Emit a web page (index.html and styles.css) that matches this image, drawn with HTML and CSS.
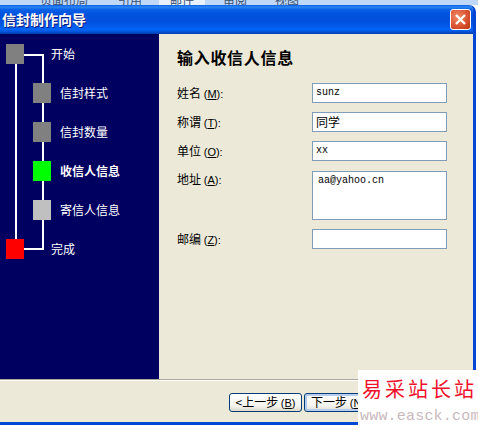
FILE: index.html
```html
<!DOCTYPE html>
<html lang="zh-CN">
<head>
<meta charset="utf-8">
<title>信封制作向导</title>
<link rel="stylesheet" href="styles.css">
</head>
<body>
<div class="screen">
  <div class="ribbon">
    <span class="tab tab-a">页面布局</span>
    <span class="tab tab-b">引用</span>
    <span class="tab tab-c">邮件</span>
    <span class="tab tab-d">审阅</span>
    <span class="tab tab-e">视图</span>
  </div>
  <div class="window">
    <div class="titlebar">
      <span class="title">信封制作向导</span>
      <span class="close"><svg width="13" height="13" viewBox="0 0 13 13"><path d="M2 2 11 11M11 2 2 11" stroke="#fff" stroke-width="2.4" fill="none"/></svg></span>
    </div>
    <div class="main">
      <nav class="nav">
        <i class="line line-outer"></i>
        <i class="line line-left"></i>
        <i class="line line-top"></i>
        <i class="line line-bottom"></i>
        <i class="node n1"></i><span class="step s1">开始</span>
        <i class="node n2"></i><span class="step s2">信封样式</span>
        <i class="node n3"></i><span class="step s3">信封数量</span>
        <i class="node n4"></i><span class="step s4 current">收信人信息</span>
        <i class="node n5"></i><span class="step s5">寄信人信息</span>
        <i class="node n6"></i><span class="step s6">完成</span>
      </nav>
      <section class="content">
        <h1 class="heading">输入收信人信息</h1>
        <div class="form">
          <label class="label">姓名 <span class="key">(<u>M</u>):</span></label>
          <div class="field mono">sunz</div>
          <label class="label">称谓 <span class="key">(<u>T</u>):</span></label>
          <div class="field">同学</div>
          <label class="label">单位 <span class="key">(<u>O</u>):</span></label>
          <div class="field mono">xx</div>
          <label class="label label-area">地址 <span class="key">(<u>A</u>):</span></label>
          <div class="field area mono">aa@yahoo.cn</div>
          <label class="label">邮编 <span class="key">(<u>Z</u>):</span></label>
          <div class="field"></div>
        </div>
      </section>
    </div>
    <footer class="footer">
      <button class="btn">&lt;上一步 <span class="key">(<u>B</u>)</span></button>
      <button class="btn btn-default">下一步 <span class="key">(<u>N</u>)</span></button>
    </footer>
  </div>
  <div class="watermark">
    <div class="wm-cn">易采站长站</div>
    <div class="wm-url">www.easck.com</div>
  </div>
</div>
</body>
</html>
```
FILE: styles.css
```css
* { box-sizing: border-box; }
html, body { margin: 0; padding: 0; background: #fff; }
body { width: 478px; height: 430px; overflow: hidden; }
.screen {
  position: relative;
  width: 478px;
  height: 430px;
  overflow: hidden;
  font-family: "Noto Sans CJK SC", "Liberation Sans", sans-serif;
  font-size: 12px;
  color: #000;
}
.ribbon {
  height: 5px;
  background: #bfd8f8;
  overflow: hidden;
  display: flex;
  color: #3a4f72;
}
.tab { display: block; margin-top: -8px; line-height: 16px; height: 13px; }
.tab-a { margin-left: 40px; width: 78px; }
.tab-b { width: 41px; }
.tab-c { width: 46px; padding-left: 11px; background: #e8f1fb; }
.tab-d { margin-left: 18px; width: 52px; }
.window {
  width: 476px;
  height: 420px;
  background: #ece9d8;
  border-right: 3px solid #0046d5;
  border-bottom: 3px solid #0046d5;
  border-top-right-radius: 7px;
  overflow: hidden;
  display: flex;
  flex-direction: column;
}
.titlebar {
  height: 29px;
  flex: none;
  display: flex;
  align-items: center;
  justify-content: space-between;
  padding: 0 2px 1px 2px;
  background: linear-gradient(#0a5de0 0, #2a86f5 7%, #0a60e8 16%, #0053de 30%, #0050dc 55%, #0059ea 72%, #0265f5 85%, #0052d6 93%, #003aa8 100%);
}
.title {
  color: #fff;
  font-size: 14px;
  font-weight: 700;
  line-height: 16px;
  text-shadow: 1px 1px 0 #0a1a80;
}
.close {
  width: 21px;
  height: 21px;
  display: flex;
  align-items: center;
  justify-content: center;
  border: 1px solid #fff;
  border-radius: 3px;
  background: radial-gradient(circle at 35% 35%, #ee8a68, #d9502f 60%, #b83512);
}
.main { height: 345px; flex: none; display: flex; }
.nav { position: relative; width: 159px; flex: none; background: #000060; color: #fff; }
.node { position: absolute; width: 18px; height: 20px; }
.n1 { left: 6px; top: 10px; background: #808080; }
.n2 { left: 33px; top: 49px; background: #808080; }
.n3 { left: 33px; top: 88px; background: #808080; }
.n4 { left: 33px; top: 127px; background: #00ff00; }
.n5 { left: 33px; top: 166px; background: #c0c0c0; }
.n6 { left: 6px; top: 205px; background: #ff0000; }
.line { position: absolute; background: #fff; }
.line-outer { left: 42px; top: 20px; width: 2px; height: 196px; }
.line-left { left: 15px; top: 30px; width: 2px; height: 175px; }
.line-top { left: 24px; top: 20px; width: 20px; height: 2px; }
.line-bottom { left: 24px; top: 214px; width: 20px; height: 2px; }
.step { position: absolute; line-height: 16px; white-space: nowrap; }
.s1 { left: 51px; top: 12px; }
.s2 { left: 60px; top: 51px; }
.s3 { left: 60px; top: 90px; }
.s4 { left: 60px; top: 129px; font-weight: 700; }
.s5 { left: 60px; top: 168px; }
.s6 { left: 51px; top: 207px; }
.content { flex: 1; padding: 13px 0 0 18px; }
.heading { margin: 0; font-size: 16px; font-weight: 700; line-height: 20px; height: 36px; letter-spacing: 0.7px; }
.form {
  display: grid;
  grid-template-columns: 135px 135px;
  grid-auto-rows: min-content;
  row-gap: 9px;
}
.label { line-height: 20px; height: 20px; white-space: nowrap; }
.label-area { margin-top: -1px; }
.key { font-family: "Liberation Sans", sans-serif; font-size: 11px; }
.field {
  height: 20px;
  background: #fff;
  border: 1px solid #7f9db9;
  padding: 0 3px;
  line-height: 18px;
  white-space: nowrap;
}
.mono { font-family: "Liberation Mono", monospace; font-size: 10px; }
.area { height: 49px; margin-top: 1px; padding: 3px 5px; line-height: 12px; }
.footer {
  flex: 1;
  border-top: 1px solid #aca899;
  box-shadow: inset 0 1px 0 #fff;
  display: flex;
  gap: 2px;
  padding: 13px 0 0 229px;
}
.btn {
  width: 73px;
  height: 19px;
  padding: 0;
  font-family: inherit;
  font-size: 12px;
  line-height: 15px;
  color: #000;
  border: 1px solid #003c74;
  border-radius: 3px;
  background: linear-gradient(#fff, #f4f3ee 70%, #dcd8cc);
  white-space: nowrap;
}
.btn-default {
  width: 75px;
  box-shadow: inset 0 0 0 2px #b5cdf0;
  text-align: left;
  padding-left: 6px;
}
.watermark {
  position: absolute;
  left: 358px;
  top: 370px;
  width: 120px;
  height: 60px;
  background: #fff;
  overflow: hidden;
}
.wm-cn {
  margin: 6px 0 0 4px;
  font-size: 20px;
  line-height: 26px;
  letter-spacing: 3px;
  color: #f0102c;
  white-space: nowrap;
}
.wm-url {
  margin: 7px 0 0 2px;
  font-family: "Liberation Mono", monospace;
  font-size: 15px;
  line-height: 16px;
  letter-spacing: 0.2px;
  color: #c9b9bd;
  white-space: nowrap;
}
```
